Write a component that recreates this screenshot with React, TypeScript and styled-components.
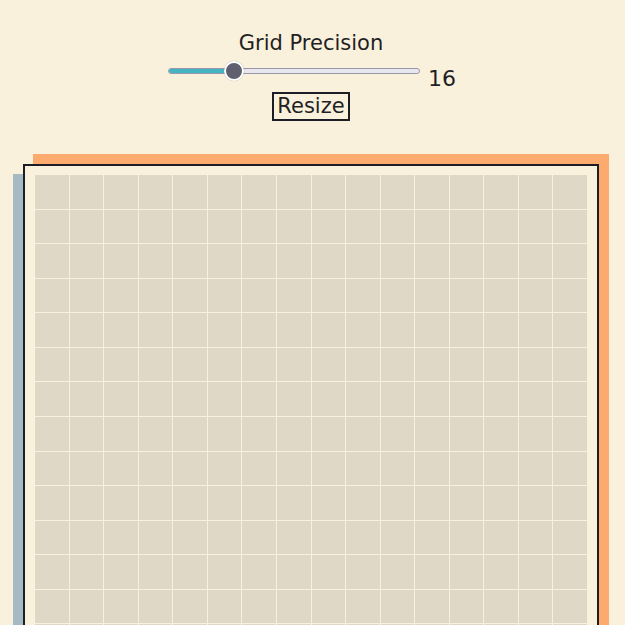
import React from "react";
import styled, { createGlobalStyle } from "styled-components";

const GlobalStyle = createGlobalStyle`
  html, body {
    margin: 0;
    padding: 0;
    background: #faf1dc;
    font-family: "DejaVu Sans", "Liberation Sans", sans-serif;
    color: #1f1f24;
    overflow: hidden;
  }
`;

const Page = styled.div`
  width: 622px;
  min-height: 625px;
  display: flex;
  flex-direction: column;
  align-items: center;
  padding-top: 31px;
  box-sizing: border-box;
`;

const Title = styled.div`
  font-size: 21px;
  line-height: 24px;
  color: #1f1f24;
`;

const SliderRow = styled.div`
  display: flex;
  align-items: flex-start;
  gap: 8px;
  margin-top: 6px;
  padding-left: 2px;
`;

const Track = styled.div`
  position: relative;
  width: 252px;
  height: 20px;
  display: flex;
  align-items: center;
`;

const Rail = styled.div`
  width: 100%;
  height: 6px;
  box-sizing: border-box;
  border-radius: 3px;
  border: 1px solid #9a98a8;
  background: #e9e7ee;
  overflow: hidden;
  display: flex;
`;

const Fill = styled.div`
  height: 100%;
  background: #43b5c2;
`;

const Thumb = styled.div`
  position: absolute;
  top: 0;
  width: 20px;
  height: 20px;
  box-sizing: border-box;
  border-radius: 50%;
  background: #5f5f70;
  border: 2px solid #ffffff;
  box-shadow: 0 0 1px rgba(0, 0, 0, 0.35);
  transform: translateX(-50%);
`;

const Value = styled.div`
  font-size: 22px;
  line-height: 26px;
  margin-top: 5px;
  color: #1f1f24;
`;

const ResizeButton = styled.button`
  margin-top: 0;
  font-family: "DejaVu Sans", "Liberation Sans", sans-serif;
  font-size: 21px;
  line-height: 23px;
  padding: 1px 3px;
  border: 2px solid #1d1d26;
  background: transparent;
  color: #1f1f24;
  border-radius: 0;
`;

const Board = styled.div`
  margin-top: 43px;
  width: 576px;
  box-sizing: border-box;
  border: 2px solid #1d1d26;
  padding: 9px 10px 10px;
  background: #faf1dc;
  box-shadow: 10px -10px 0 #fcaa6e, -10px 10px 0 #a5bac3;
`;

const Grid = styled.div<{ $n: number }>`
  display: grid;
  grid-template-columns: repeat(${(p) => p.$n}, 1fr);
  grid-auto-rows: ${(p) => (552 - (p.$n - 1)) / p.$n}px;
  gap: 1px;
  width: 552px;
`;

const Cell = styled.div`
  background: #dfd8c6;
`;

export default function App() {
  const value = 16;
  const thumbX = 66;
  const n = value;
  const cells = Array.from({ length: n * n });
  return (
    <>
      <GlobalStyle />
      <Page>
        <Title>Grid Precision</Title>
        <SliderRow>
          <Track>
            <Rail>
              <Fill style={{ width: `${thumbX}px` }} />
            </Rail>
            <Thumb style={{ left: `${thumbX}px` }} />
          </Track>
          <Value>{value}</Value>
        </SliderRow>
        <ResizeButton>Resize</ResizeButton>
        <Board>
          <Grid $n={n}>
            {cells.map((_, i) => (
              <Cell key={i} />
            ))}
          </Grid>
        </Board>
      </Page>
    </>
  );
}
